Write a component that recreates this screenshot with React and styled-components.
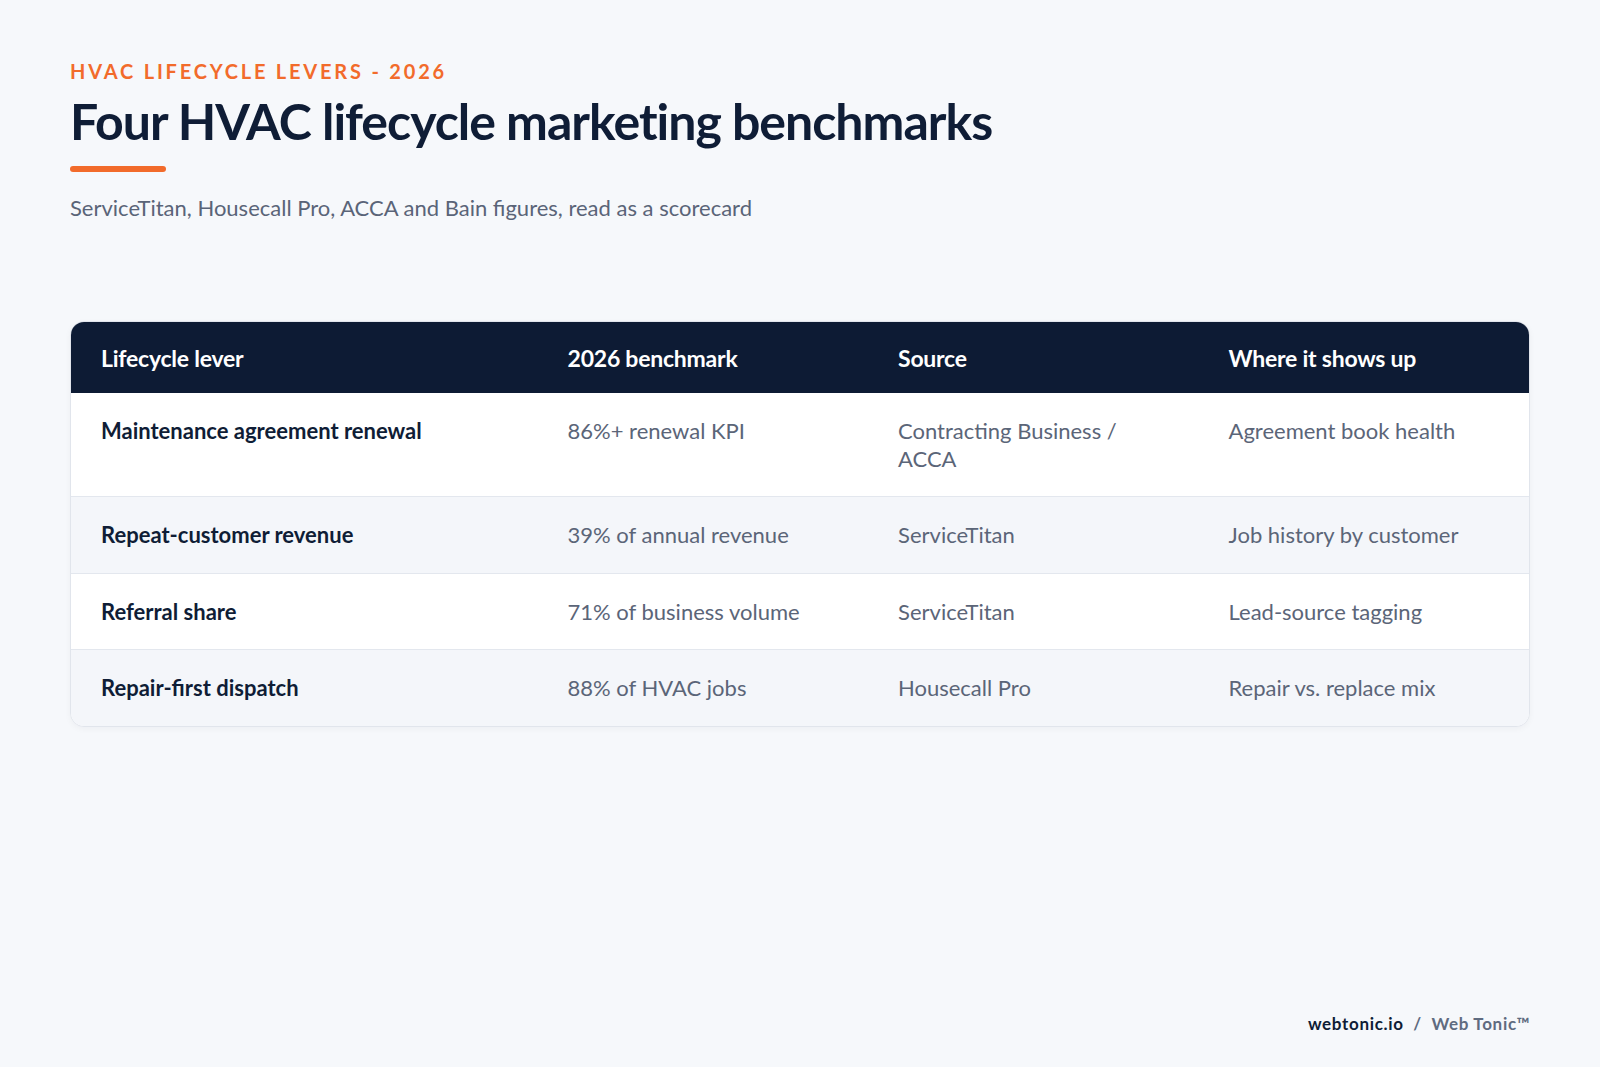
import React from "react";
import styled, { createGlobalStyle } from "styled-components";

const Global = createGlobalStyle`
  html, body { margin: 0; padding: 0; background: #f6f8fb; }
  body { font-family: Lato, "Noto Sans", "Liberation Sans", sans-serif; -webkit-font-smoothing: antialiased; }
  * { box-sizing: border-box; }
`;

const Page = styled.main`
  width: 1600px;
  height: 1067px;
  padding: 59px 70px 0 70px;
  display: flex;
  flex-direction: column;
  background: #f6f8fb;
`;

const Eyebrow = styled.div`
  font-size: 20px;
  line-height: 24px;
  font-weight: 700;
  letter-spacing: 0.14em;
  color: #f26b2b;
  text-transform: uppercase;
`;

const Title = styled.h1`
  margin: 8px 0 0 0;
  font-size: 50px;
  line-height: 60px;
  font-weight: 700;
  letter-spacing: -0.02em;
  color: #0f1d36;
`;

const Accent = styled.div`
  width: 96px;
  height: 6px;
  border-radius: 3px;
  background: #f26b2b;
  margin-top: 15px;
`;

const Subtitle = styled.p`
  margin: 23px 0 0 0;
  font-size: 22px;
  line-height: 26px;
  font-weight: 400;
  color: #5a6478;
`;

const Table = styled.div`
  margin-top: 100px;
  border: 1px solid #e1e5ec;
  border-radius: 14px;
  overflow: hidden;
  background: #ffffff;
  box-shadow: 0 2px 6px rgba(15, 29, 54, 0.04);
`;

const Row = styled.div`
  display: grid;
  grid-template-columns: 32% 1fr 1fr 1fr;
  background: ${(p) => (p.$head ? "#0d1b34" : p.$alt ? "#f4f6fa" : "#ffffff")};
  border-top: ${(p) => (p.$first || p.$head ? "none" : "1px solid #e3e7ee")};
  min-height: ${(p) => (p.$head ? "71px" : "auto")};
  align-items: ${(p) => (p.$head ? "center" : "start")};
`;

const HeadCell = styled.div`
  padding: 0 30px;
  font-size: 23px;
  line-height: 28px;
  font-weight: 700;
  color: #ffffff;
  letter-spacing: -0.01em;
`;

const Cell = styled.div`
  padding: 24px 30px;
  font-size: 22px;
  line-height: 27.5px;
  font-weight: ${(p) => (p.$strong ? 700 : 400)};
  color: ${(p) => (p.$strong ? "#0f1d36" : "#5b6578")};
`;

const Footer = styled.footer`
  margin-top: auto;
  margin-bottom: 33px;
  align-self: flex-end;
  font-size: 17px;
  line-height: 20px;
  font-weight: 700;
  letter-spacing: 0.04em;
  color: #0f1d36;
`;

const Muted = styled.span`
  color: #5f6b80;
`;

const rows = [
  ["Maintenance agreement renewal", "86%+ renewal KPI", "Contracting Business / ACCA", "Agreement book health"],
  ["Repeat-customer revenue", "39% of annual revenue", "ServiceTitan", "Job history by customer"],
  ["Referral share", "71% of business volume", "ServiceTitan", "Lead-source tagging"],
  ["Repair-first dispatch", "88% of HVAC jobs", "Housecall Pro", "Repair vs. replace mix"],
];

export default function App() {
  return (
    <>
      <Global />
      <Page>
        <Eyebrow>HVAC Lifecycle Levers - 2026</Eyebrow>
        <Title>Four HVAC lifecycle marketing benchmarks</Title>
        <Accent />
        <Subtitle>ServiceTitan, Housecall Pro, ACCA and Bain figures, read as a scorecard</Subtitle>
        <Table>
          <Row $head>
            <HeadCell>Lifecycle lever</HeadCell>
            <HeadCell>2026 benchmark</HeadCell>
            <HeadCell>Source</HeadCell>
            <HeadCell>Where it shows up</HeadCell>
          </Row>
          {rows.map((r, i) => (
            <Row key={r[0]} $alt={i % 2 === 1} $first={i === 0}>
              <Cell $strong>{r[0]}</Cell>
              <Cell>{r[1]}</Cell>
              <Cell>{r[2]}</Cell>
              <Cell>{r[3]}</Cell>
            </Row>
          ))}
        </Table>
        <Footer>
          webtonic.io <Muted>&nbsp;/&nbsp; Web Tonic™</Muted>
        </Footer>
      </Page>
    </>
  );
}
